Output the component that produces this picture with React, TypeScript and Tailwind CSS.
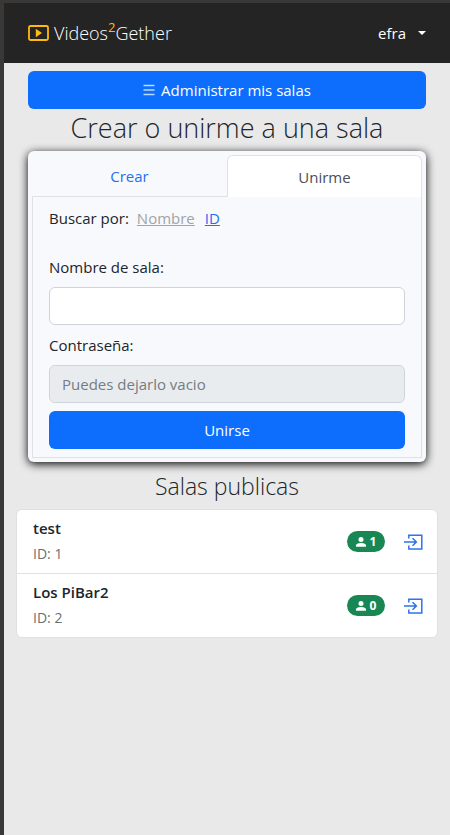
import { useState } from "react";

interface Room {
  id: number;
  name: string;
  users: number;
}

const rooms: Room[] = [
  { id: 1, name: "test", users: 1 },
  { id: 2, name: "Los PiBar2", users: 0 },
];

function PlayLogo() {
  return (
    <svg viewBox="0 0 21 16" className="h-4 w-[21px]" fill="none" aria-hidden="true">
      <rect x="1" y="1" width="19" height="14" rx="1.5" stroke="#ffb90f" strokeWidth="1.8" />
      <path d="M7.800 3.800v8.400l6.200-4.200z" fill="#ffb90f" />
    </svg>
  );
}

function ListIcon() {
  return (
    <svg viewBox="0 0 12 12" className="h-3 w-3" stroke="#b9dcff" strokeWidth="1.5" aria-hidden="true">
      <path d="M0.500 1.500h11M0.500 6h11M0.500 10.500h11" />
    </svg>
  );
}

function PersonIcon() {
  return (
    <svg viewBox="0 0 10 10" className="h-[10px] w-[10px]" fill="white" aria-hidden="true">
      <circle cx="5" cy="2.6" r="2.5" />
      <path d="M0 9.7V8.4C0 6.7 3.2 6 5 6s5 .7 5 2.400v1.300z" />
    </svg>
  );
}

function EnterIcon() {
  return (
    <svg viewBox="0 0 20 16" className="h-4 w-5" fill="none" stroke="#2f73e6" strokeWidth="1.500" aria-hidden="true">
      <path d="M5.800 4.500V1.200H18.800V15H5.800V11.500" />
      <path d="M1 8H13.500M9.500 4.200L13.400 8L9.500 11.800" />
    </svg>
  );
}

function RoomItem({ room }: { room: Room }) {
  return (
    <li className="flex h-16 items-center border-b border-[#dee2e6] pr-[14px] pl-4 last:h-[63px] last:border-b-0">
      <div className="flex-1 pb-1">
        <h3 className="text-[15px] leading-6 font-semibold">{room.name}</h3>
        <p className="pt-1 text-sm leading-5 text-[#6a6f74]">ID: {room.id}</p>
      </div>
      <span className="mr-4 flex h-[21px] w-[38px] items-center justify-center gap-1 rounded-full bg-[#198754] text-xs font-bold text-white">
        <PersonIcon />
        {room.users}
      </span>
      <button type="button" aria-label={`Entrar a ${room.name}`} className="pl-0.5">
        <EnterIcon />
      </button>
    </li>
  );
}

export default function App() {
  const [roomName, setRoomName] = useState("");
  const [password, setPassword] = useState("");

  return (
    <div className="min-h-screen border-t-[3px] border-l-4 border-[#3a3836] bg-[#e9e9e9] font-['Open_Sans','Noto_Sans',sans-serif] text-[15px] leading-6 text-[#212529]">
      <header className="flex h-[60px] items-center justify-between bg-[#242424] px-6 text-white">
        <a href="#inicio" className="flex items-center gap-[5px]">
          <PlayLogo />
          <span className="text-lg font-light">
            Videos<sup className="-top-2 text-[13px] font-normal text-[#ffb90f]">2</sup>Gether
          </span>
        </a>
        <button type="button" className="flex items-center gap-3">
          efra
          <svg viewBox="0 0 8 4" className="h-1 w-2" fill="white" aria-hidden="true">
            <path d="M0 0h8L4 4z" />
          </svg>
        </button>
      </header>

      <main className="px-3 pt-2">
        <section className="px-3">
          <button type="button" className="flex h-[38px] w-full items-center justify-center gap-1.5 rounded-md bg-[#0d6efd] text-white">
            <ListIcon />
            Administrar mis salas
          </button>
          <h1 className="h-[42px] text-center text-[27px] leading-[38px] font-light">Crear o unirme a una sala</h1>

          <div className="rounded-md bg-[#f8f9fc] p-1 shadow-[0_2px_10px_#000000]">
            <div role="tablist" className="grid h-[42px] grid-cols-2">
              <button type="button" role="tab" aria-selected="false" className="border-b border-[#dee2e6] text-[#2470ee]">
                Crear
              </button>
              <button type="button" role="tab" aria-selected="true" className="rounded-t-md border border-b-0 border-[#dee2e6] bg-white text-[#495057]">
                Unirme
              </button>
            </div>
            <form className="flex flex-col gap-2 border border-t-0 border-[#dee2e6] px-4 pt-[9px] pb-2" onSubmit={(e) => e.preventDefault()}>
              <div className="mb-[17px] flex">
                <span className="mr-2">Buscar por:</span>
                <a href="#nombre" className="mr-2.5 text-[#a0a4a8] underline">Nombre</a>
                <a href="#id" className="text-[#2470ee] underline">ID</a>
              </div>
              <label htmlFor="sala">Nombre de sala:</label>
              <input
                id="sala"
                type="text"
                value={roomName}
                onChange={(e) => setRoomName(e.target.value)}
                className="h-[38px] w-full rounded-md border border-[#ced4da] bg-white px-3"
              />
              <label htmlFor="clave">Contraseña:</label>
              <input
                id="clave"
                type="password"
                placeholder="Puedes dejarlo vacio"
                disabled
                value={password}
                onChange={(e) => setPassword(e.target.value)}
                className="h-[38px] w-full rounded-md border border-[#ced4da] bg-[#e9ecef] px-3 placeholder:text-[#757c83]"
              />
              <button type="submit" className="h-[38px] w-full rounded-md bg-[#0d6efd] text-white">
                Unirse
              </button>
            </form>
          </div>
        </section>

        <section>
          <h2 className="h-[47px] text-center text-[23px] leading-[48px] font-light">Salas publicas</h2>
          <ul className="rounded-md border border-[#dee0e2] bg-white">
            {rooms.map((room) => (
              <RoomItem key={room.id} room={room} />
            ))}
          </ul>
        </section>
      </main>
    </div>
  );
}
